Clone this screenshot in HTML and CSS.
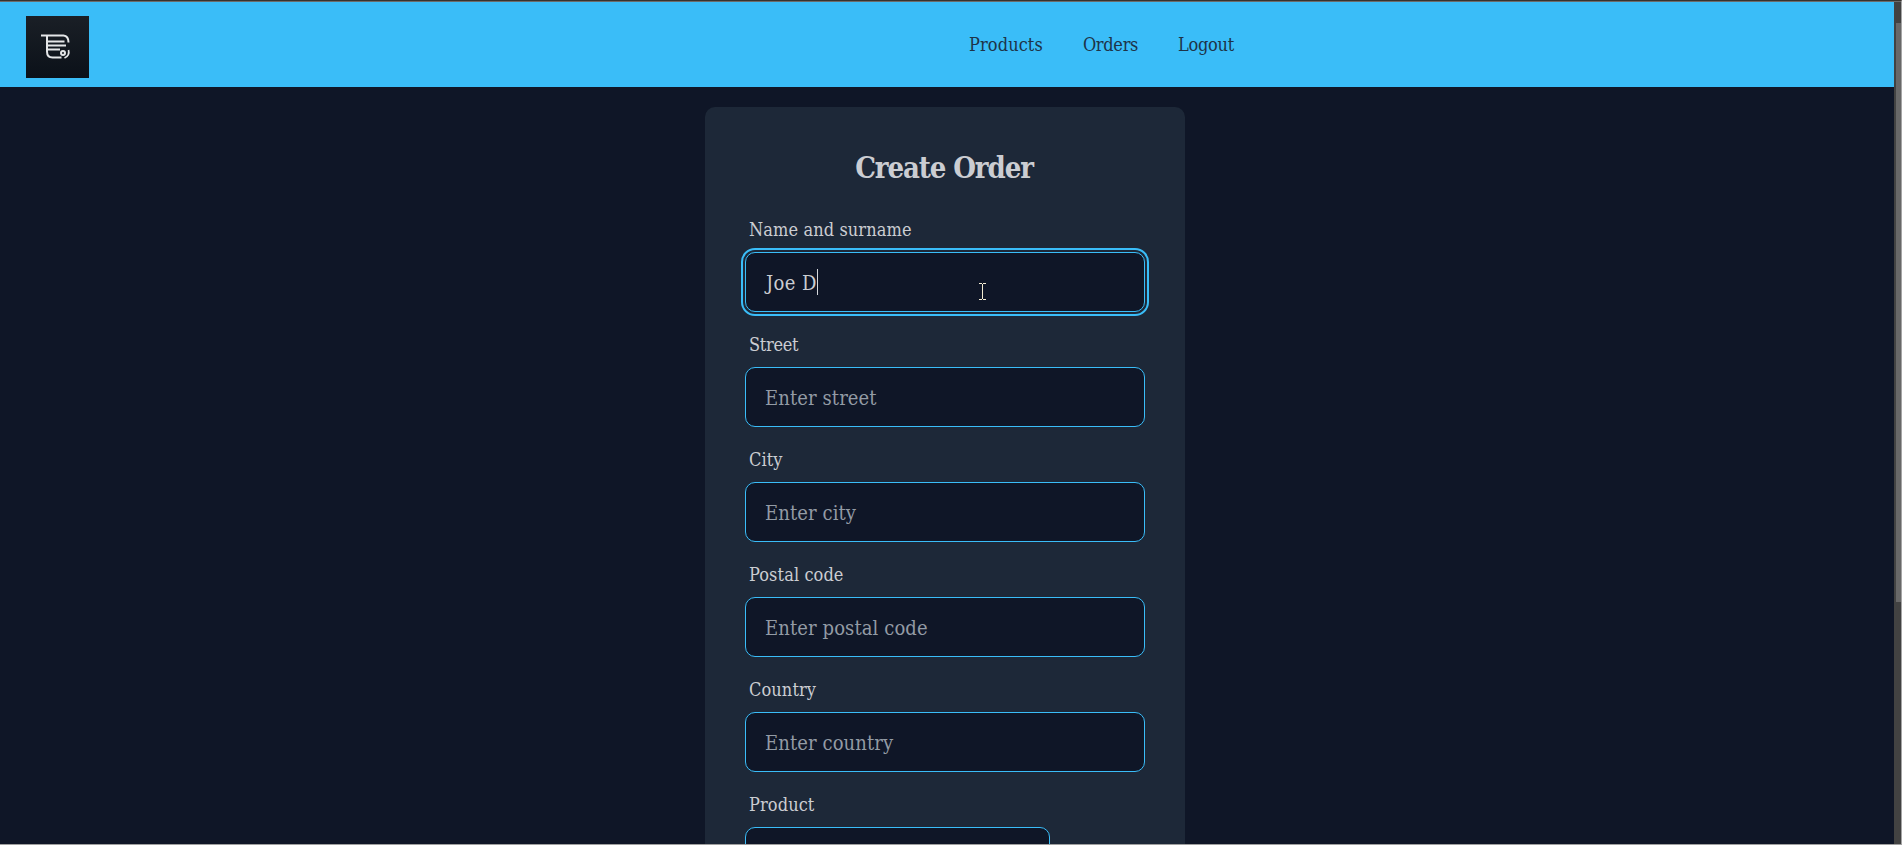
FILE: index.html
```html
<!DOCTYPE html>
<html lang="en">
<head>
<meta charset="utf-8">
<title>Create Order</title>
<link rel="stylesheet" href="styles.css">
</head>
<body>
<div class="window">
  <div class="view">
    <header class="header">
      <a class="logo" href="#">
        <svg viewBox="0 0 63 62" width="63" height="62" fill="none" stroke="#e4e6e8" stroke-width="2">
          <path d="M15 19.500H37.500Q42.500 20 42.500 26.500"/>
          <path d="M21 20V35.500Q21 41.500 26.500 41.500H35.500"/>
          <path d="M22 25.500H38.500M22 29.500H40M22 33.500H34"/>
          <circle cx="37" cy="37" r="2"/>
          <path d="M42.500 34Q44 39.500 38.500 42" stroke-width="1.700"/>
        </svg>
      </a>
      <nav class="nav">
        <a href="#">Products</a>
        <a class="tight" href="#">Orders</a>
        <a class="tight" href="#">Logout</a>
      </nav>
    </header>
    <main class="main">
      <form class="card">
        <h1 class="title">Create Order</h1>
        <div class="field">
          <label class="label">Name and surname</label>
          <div class="input focused">Joe D<i class="caret"></i>
            <svg class="pointer" width="7" height="17" viewBox="0 0 7 17" stroke="#f3ecd2" fill="none"><path d="M0 .5H3M4 .5H7M3.500 1V16M0 16.500H3M4 16.500H7"/></svg>
          </div>
        </div>
        <div class="field">
          <label class="label tight">Street</label>
          <div class="input placeholder">Enter street</div>
        </div>
        <div class="field">
          <label class="label">City</label>
          <div class="input placeholder">Enter city</div>
        </div>
        <div class="field">
          <label class="label">Postal code</label>
          <div class="input placeholder">Enter postal code</div>
        </div>
        <div class="field">
          <label class="label">Country</label>
          <div class="input placeholder">Enter country</div>
        </div>
        <div class="field">
          <label class="label">Product</label>
          <div class="input select"></div>
        </div>
      </form>
    </main>
  </div>
  <div class="scrollbar"><div class="thumb"></div></div>
</div>
</body>
</html>
```
FILE: styles.css
```css
* { box-sizing: border-box; }
body {
  margin: 0;
  height: 845px;
  overflow: hidden;
  background: #0f1627;
  color: #cbcdd2;
  font-family: "Roboto Slab", "DejaVu Serif Condensed", "DejaVu Serif", serif;
  font-stretch: condensed;
}
.window {
  display: flex;
  height: 845px;
  border-top: 1px solid #38332f;
  border-right: 1px solid #a5a5a5;
  border-bottom: 1px solid #a0a0a0;
}
.view { flex: 1; overflow: hidden; border-top: 1px solid #6b6b6b; }
.header {
  display: flex;
  align-items: flex-start;
  height: 85px;
  padding: 14px 0 0 26px;
  background: #3abdf8;
}
.logo {
  display: block;
  width: 63px;
  height: 62px;
  background: linear-gradient(#1a1f26, #0b1119);
}
.logo svg { display: block; }
.nav {
  display: flex;
  gap: 40px;
  margin: 17px 0 0 880px;
  font-size: 18px;
  letter-spacing: 0.1px;
}
.nav a { color: #1e3448; text-decoration: none; line-height: 24px; }
.nav .tight, .label.tight { letter-spacing: -0.3px; }
.main { display: flex; justify-content: center; padding: 20px 4px 0 0; }
.card {
  width: 480px;
  height: 900px;
  padding: 40px;
  border-radius: 10px;
  background: #1d2838;
}
.title {
  margin: 0 2px 19px 0;
  font-size: 29px;
  line-height: 42px;
  letter-spacing: -1.1px;
  text-align: center;
}
.field { height: 115px; }
.label {
  display: flex;
  align-items: center;
  height: 44px;
  padding: 0 0 2px 4px;
  font-size: 18px;
  letter-spacing: 0.1px;
}
.input {
  position: relative;
  display: flex;
  align-items: center;
  height: 60px;
  padding: 2px 0 0 19px;
  border: 1px solid #3abdf8;
  border-radius: 10px;
  background: #0f1627;
  font-size: 20px;
  letter-spacing: 0.1px;
}
.focused {
  padding-left: 20px;
  letter-spacing: 0.4px;
  outline: 2px solid #3abdf8;
  outline-offset: 2px;
}
.placeholder { color: #939ba5; }
.select { width: 305px; }
.caret { width: 1px; height: 26px; margin-top: -2px; background: #d5d7db; }
.pointer { position: absolute; left: 233px; top: 30px; }
.scrollbar { width: 7px; padding: 21px 0 0 2px; background: #424242; border-top: 1px solid #6b6b6b; }
.thumb { height: 579px; background: #686868; }
```
